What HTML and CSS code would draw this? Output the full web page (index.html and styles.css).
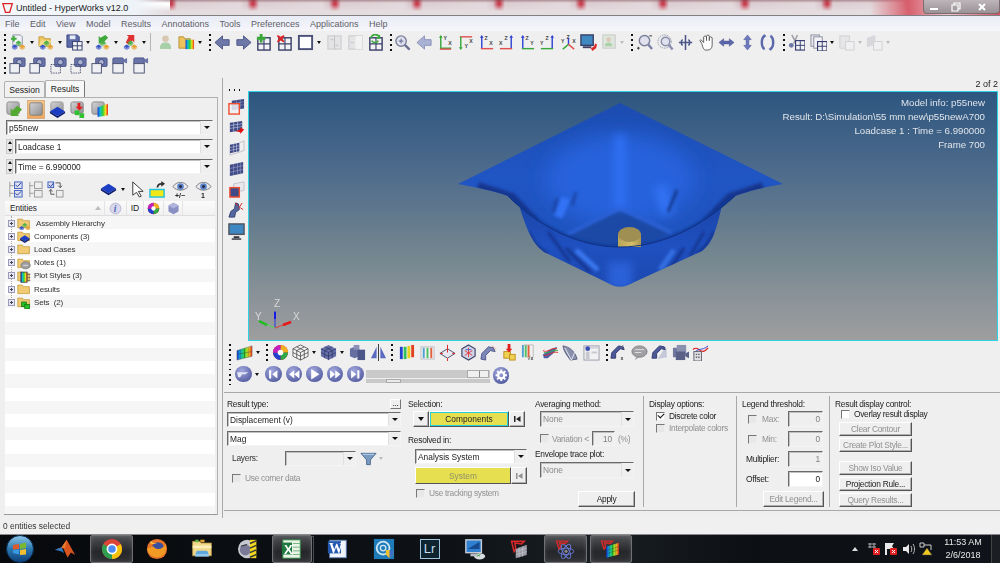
FILE: index.html
```html
<!DOCTYPE html>
<html lang="en">
<head>
<meta charset="utf-8">
<title>Untitled - HyperWorks v12.0</title>
<link rel="stylesheet" href="styles.css">
</head>
<body>
<svg class="defs" aria-hidden="true">
<defs>
<radialGradient id="gb" cx=".4" cy=".3" r=".8"><stop offset="0" stop-color="#9aa2dc"/><stop offset="1" stop-color="#3d478f"/></radialGradient>
<linearGradient id="rb" x1="0" x2="1"><stop offset="0" stop-color="#1630d8"/><stop offset=".25" stop-color="#10c0d0"/><stop offset=".5" stop-color="#30d030"/><stop offset=".75" stop-color="#f0e020"/><stop offset="1" stop-color="#e83020"/></linearGradient>
<linearGradient id="orb" x1="0" y1="0" x2="0" y2="1"><stop offset="0" stop-color="#8fc8ea"/><stop offset=".5" stop-color="#2a78b0"/><stop offset="1" stop-color="#0c3f78"/></linearGradient>
<linearGradient id="fg" x1="0" y1="0" x2="1" y2="1"><stop offset="0" stop-color="#d4d4d6"/><stop offset="1" stop-color="#8e8e92"/></linearGradient>
<g id="cb"><path d="M0 2 3 0l3 2-3 2z"/><path d="M0 2l3 2 3-2v2L3 6 0 4z" fill-opacity=".65"/></g>
<g id="bkg"><use href="#cb" x="6" y="7" fill="#4fb04a"/><use href="#cb" x="2" y="11" fill="#3a55c8"/><use href="#cb" x="10" y="11" fill="#e8a030"/></g>
<symbol id="s-new" viewBox="0 0 18 18"><path d="M3 1h8l2 2v9H3z" fill="#f2f3f7" stroke="#8c90a6"/><path d="M3 2h2v2h2v2H5v2H3V6H1V4h2z" fill="#3eaa3a"/><use href="#bkg"/></symbol>
<symbol id="s-open" viewBox="0 0 18 18"><path d="M1 3h5l1 2h6v8H1z" fill="#f0c860" stroke="#c09a40"/><path d="M1 13l2-6h11l-2 6z" fill="#f7dc8c"/><use href="#bkg"/></symbol>
<symbol id="s-save" viewBox="0 0 18 18"><path d="M1 1h11l2 2v11H1z" fill="#5d6ba8" stroke="#3a4580"/><rect x="4" y="1.500" width="6" height="4" fill="#e8eaf4"/><rect x="7" y="8" width="10" height="9" fill="#f2f2f2" stroke="#333c70"/><path d="M12 8v9M7 12.500h10" stroke="#333c70"/></symbol>
<symbol id="s-imp" viewBox="0 0 18 18"><path d="M12 1l3 3-4 4 2 2H5V2l2 2z" fill="#3ea83a"/><use href="#bkg"/></symbol>
<symbol id="s-exp" viewBox="0 0 18 18"><path d="M4 9l3 2 4-4 2 2V1H5l2 2z" fill="#e03030"/><use href="#bkg"/></symbol>
<symbol id="s-person" viewBox="0 0 18 18"><circle cx="9" cy="5" r="3.500" fill="#d8c8b0"/><path d="M3 16c0-5 2-7 6-7s6 2 6 7z" fill="#a8d0a8"/></symbol>
<symbol id="s-frb" viewBox="0 0 18 18"><path d="M1 3h5l1 2h6v10H1z" fill="#eec25c" stroke="#b8923c"/><rect x="8" y="6" width="9" height="10" fill="url(#rb)"/></symbol>
<symbol id="s-al" viewBox="0 0 18 18"><path d="M1 9l8-7v4h7v6H9v4z" fill="#6d78a8" stroke="#4a5488"/></symbol>
<symbol id="s-ar" viewBox="0 0 18 18"><path d="M17 9L9 2v4H2v6h7v4z" fill="#6d78a8" stroke="#4a5488"/></symbol>
<g id="pg"><rect x="3" y="4" width="13" height="13" fill="#f3f3f6" stroke="#3a4068" stroke-width="1.500"/><path d="M9.500 4v13M3 10.500h13" stroke="#3a4068" stroke-width="1.200"/></g>
<symbol id="s-padd" viewBox="0 0 18 18"><use href="#pg"/><path d="M5 0h3v3h3v3H8v3H5V6H2V3h3z" fill="#3aa838"/></symbol>
<symbol id="s-pdel" viewBox="0 0 18 18"><use href="#pg"/><path d="M2 1l3 2 3-2 1 1-2 3 2 3-1 1-3-2-3 2-1-1 2-3-2-3z" fill="#d82828"/></symbol>
<symbol id="s-sq" viewBox="0 0 18 18"><rect x="2" y="2" width="14" height="14" fill="#fff" stroke="#4a5078" stroke-width="2"/></symbol>
<symbol id="s-pf1" viewBox="0 0 18 18"><rect x="2" y="2" width="14" height="14" fill="#e4e4e6" stroke="#c8c8cc"/><path d="M9 2v14M5 6h3M10 12h3" stroke="#c0c0c4"/></symbol>
<symbol id="s-pf2" viewBox="0 0 18 18"><rect x="2" y="2" width="14" height="14" fill="#e4e4e6" stroke="#c8c8cc"/><rect x="9" y="2" width="7" height="14" fill="#f2f2f2"/><path d="M4 9h3" stroke="#c0c0c4"/></symbol>
<symbol id="s-pref" viewBox="0 0 18 18"><use href="#pg"/><path d="M4 4a5 5 0 0 1 9-1M13 1v3h-3M12 7a4 4 0 0 1-7 0" fill="none" stroke="#3aa838" stroke-width="1.800"/></symbol>
<symbol id="s-zm" viewBox="0 0 18 18"><circle cx="7.500" cy="7.500" r="5.500" fill="#dfe2ee" stroke="#7a7f98" stroke-width="1.500"/><path d="M5 7.500h5M7.500 5v5" stroke="#5a6088"/><path d="M11.500 11.500l5 5" stroke="#6b7090" stroke-width="2.500"/></symbol>
<symbol id="s-alf" viewBox="0 0 18 18"><path d="M1 9l8-7v4h7v6H9v4z" fill="#aab2d4" stroke="#8b93bd"/></symbol>
<symbol id="s-a1" viewBox="0 0 18 18"><path d="M4 16V2M4 15h11" fill="none" stroke="#38a83c" stroke-width="1.500"/><path d="M3 16h12" stroke="#e25050" stroke-width="1.500"/><path d="M2 4l2-3 2 3z" fill="#38a83c"/><text x="7" y="6" class="axl">Y</text><text x="12" y="12" class="axl">X</text></symbol>
<symbol id="s-a2" viewBox="0 0 18 18"><path d="M3 3h13" stroke="#e25050" stroke-width="1.500"/><path d="M4 3v12" stroke="#38a83c" stroke-width="1.500"/><path d="M2 14l2 3 2-3z" fill="#38a83c"/><text x="13" y="9" class="axl">X</text><text x="8" y="15" class="axl">Y</text></symbol>
<symbol id="s-a3" viewBox="0 0 18 18"><path d="M4 15V3" stroke="#2f42d0" stroke-width="1.500"/><path d="M3 15.500h13" stroke="#e25050" stroke-width="1.500"/><path d="M2 4l2-3 2 3z" fill="#2f42d0"/><text x="7" y="6" class="axl">Z</text><text x="12" y="12" class="axl">X</text></symbol>
<symbol id="s-a4" viewBox="0 0 18 18"><path d="M14 15V3" stroke="#2f42d0" stroke-width="1.500"/><path d="M2 15.500h13" stroke="#e25050" stroke-width="1.500"/><path d="M12 4l2-3 2 3z" fill="#2f42d0"/><text x="7" y="6" class="axl">Z</text><text x="1" y="12" class="axl">X</text></symbol>
<symbol id="s-a5" viewBox="0 0 18 18"><path d="M4 15V3" stroke="#2f42d0" stroke-width="1.500"/><path d="M3 15.500h13" stroke="#38a83c" stroke-width="1.500"/><path d="M2 4l2-3 2 3z" fill="#2f42d0"/><text x="7" y="6" class="axl">Z</text><text x="12" y="12" class="axl">Y</text></symbol>
<symbol id="s-a6" viewBox="0 0 18 18"><path d="M14 15V3" stroke="#2f42d0" stroke-width="1.500"/><path d="M2 15.500h13" stroke="#38a83c" stroke-width="1.500"/><path d="M12 4l2-3 2 3z" fill="#2f42d0"/><text x="7" y="6" class="axl">Z</text><text x="1" y="12" class="axl">Y</text></symbol>
<symbol id="s-a7" viewBox="0 0 18 18"><path d="M9 11V4" stroke="#2f42d0" stroke-width="1.500"/><path d="M9 11l-6 5" stroke="#38a83c" stroke-width="1.500"/><path d="M9 11l6 5" stroke="#e25050" stroke-width="1.500"/><text x="7" y="5" class="axl">Z</text><text x="1" y="10" class="axl">Y</text><text x="13" y="10" class="axl">X</text></symbol>
<symbol id="s-mon" viewBox="0 0 18 18"><rect x="1" y="1" width="13" height="11" fill="#3f88c0" stroke="#3a4068" stroke-width="1.500"/><path d="M3 14h9" stroke="#3a4068" stroke-width="2"/><path d="M9 13l3 2 3-2 1-3 2 1-1 4-4 3-1-2z" fill="#d82828"/></symbol>
<symbol id="s-pfd" viewBox="0 0 18 18"><rect x="2" y="1" width="13" height="14" fill="#dfe6de" stroke="#c6c8c6"/><circle cx="8" cy="6" r="2.500" fill="#d9cbb8"/><path d="M4 13c0-3 2-4 4-4s4 1 4 4z" fill="#aad0aa"/></symbol>
<symbol id="s-zb" viewBox="0 0 18 18"><circle cx="9" cy="7" r="5.500" fill="#dfe2ee" stroke="#7a7f98" stroke-width="1.500"/><path d="M13 11l4 5" stroke="#7a80a8" stroke-width="2.500"/><path d="M14 2h3M1 15h3M2.500 13.500v3" stroke="#333"/></symbol>
<symbol id="s-zw" viewBox="0 0 18 18"><circle cx="8" cy="8" r="7" fill="none" stroke="#8a8ea4" stroke-dasharray="1.500 1"/><circle cx="9" cy="8" r="4.500" fill="#dfe2ee" stroke="#8a8ea8" stroke-width="1.500"/><path d="M12.500 11.500l4 5" stroke="#8a8eb0" stroke-width="2.500"/></symbol>
<symbol id="s-rot" viewBox="0 0 18 18"><path d="M9 1v16M2 9h14M6 6c-2 1-2 5 0 6M12 6c2 1 2 5 0 6" fill="none" stroke="#4a5488" stroke-width="1.600"/></symbol>
<symbol id="s-hand" viewBox="0 0 18 18"><path d="M4 10 2 7l1-1 3 3V3l1.500-1L9 3v4-5l1.500-1L12 2v5-3l1.500-1L15 4v8c0 3-2 5-5 5H8c-2 0-3-3-4-7z" fill="#fff" stroke="#5a5a5a"/></symbol>
<symbol id="s-h2" viewBox="0 0 18 18"><path d="M1 9l5-4v2.500h6V5l5 4-5 4v-2.500H6V13z" fill="#5c68ac" stroke="#444e8c" stroke-width=".5"/></symbol>
<symbol id="s-v2" viewBox="0 0 18 18"><path d="M9 1l4 5h-2.500v6H13l-4 5-4-5h2.500V6H5z" fill="#6c78c0" stroke="#4a5490" stroke-width=".5"/></symbol>
<symbol id="s-rr" viewBox="0 0 18 18"><path d="M6 2C2 4 2 14 6 16M12 2c4 2 4 12 0 14" fill="none" stroke="#5c68ac" stroke-width="2.600"/><path d="M5 0l3 2-3 2zM13 14l-3 2 3 2z" fill="#5c68ac"/></symbol>
<symbol id="s-cut" viewBox="0 0 18 18"><path d="M4 1l5 9M10 1L6 10" stroke="#9a9aa4" stroke-width="1.500"/><circle cx="3.500" cy="12" r="2.500" fill="#6c78a8"/><rect x="8" y="7" width="10" height="10" fill="#f2f2f2" stroke="#333c70" stroke-width="1.200"/><path d="M13 7v10M8 12h10" stroke="#333c70"/></symbol>
<symbol id="s-cpy" viewBox="0 0 18 18"><rect x="1" y="1" width="9" height="12" fill="#e8e8ee" stroke="#8a8ea0"/><rect x="4" y="3" width="9" height="12" fill="#f2f2f6" stroke="#8a8ea0"/><rect x="8" y="8" width="10" height="10" fill="#f2f2f2" stroke="#333c70" stroke-width="1.200"/><path d="M13 8v10M8 13h10" stroke="#333c70"/></symbol>
<symbol id="s-psf" viewBox="0 0 18 18"><rect x="2" y="2" width="10" height="13" fill="#e6e6e8" stroke="#d0d0d4"/><rect x="8" y="8" width="9" height="9" fill="#f0f0f2" stroke="#d0d0d4"/></symbol>
<symbol id="s-psf2" viewBox="0 0 18 18"><path d="M1 4l9-3v10l-9 3z" fill="#d8d8dc"/><rect x="8" y="8" width="9" height="9" fill="#f0f0f2" stroke="#d0d0d4"/></symbol>
<symbol id="s-cam" viewBox="0 0 18 18"><rect x="5" y="1" width="12" height="9" rx="1" fill="#6a74a8" stroke="#4a5488"/><circle cx="11" cy="5.500" r="3" fill="#aab0d0" stroke="#3f497c"/><rect x="1" y="7" width="10" height="10" fill="#eef0f4" stroke="#4a5070"/></symbol>
<symbol id="s-cam2" viewBox="0 0 18 18"><rect x="5" y="1" width="12" height="9" rx="1" fill="#6a74a8" stroke="#4a5488"/><circle cx="11" cy="5.500" r="3" fill="#aab0d0" stroke="#3f497c"/><rect x="1" y="8" width="10" height="9" fill="none" stroke="#4a5070" stroke-dasharray="1.500 1"/></symbol>
<symbol id="s-vid" viewBox="0 0 18 18"><rect x="2" y="1" width="11" height="7" rx="1" fill="#6a74a8" stroke="#4a5488"/><path d="M13 3l4-2v6l-4-2z" fill="#6a74a8"/><rect x="2" y="7" width="11" height="10" fill="#eef0f4" stroke="#4a5070"/></symbol>
<symbol id="s-cont" viewBox="0 0 18 18"><path d="M1 7l16-5v11L1 17z" fill="url(#rb)" stroke="#555" stroke-width=".5"/><path d="M5 6v10M9 5v10M13 4v10M1 11l16-3" stroke="#333" stroke-width=".4"/></symbol>
<symbol id="s-wheel" viewBox="0 0 18 18"><circle cx="9" cy="9" r="8" fill="#e02828"/><path d="M9 9V1a8 8 0 0 1 8 8z" fill="#f0b020"/><path d="M9 9h8a8 8 0 0 1-8 8z" fill="#2fa84a"/><path d="M9 9v8a8 8 0 0 1-8-8z" fill="#2040d0"/><path d="M9 9H1a8 8 0 0 1 8-8z" fill="#c020c0"/><circle cx="9" cy="9" r="3" fill="#fff"/></symbol>
<symbol id="s-wire" viewBox="0 0 18 18"><path d="M9 1l8 4v8l-8 4-8-4V5z M1 5l8 4 8-4M9 9v8M5 3l8 4v8M13 3L5 7v8M1 9l8 4 8-4" fill="#f4f4f4" stroke="#444" stroke-width=".8"/></symbol>
<symbol id="s-solid" viewBox="0 0 18 18"><path d="M9 1l8 4v8l-8 4-8-4V5z" fill="#6670a8"/><path d="M1 5l8 4 8-4M9 9v8M5 3l8 4v8M13 3L5 7v8M1 9l8 4 8-4" fill="none" stroke="#30386c" stroke-width=".8"/></symbol>
<symbol id="s-bl" viewBox="0 0 18 18"><path d="M1 5l5-2 5 2v8l-5 2-5-2z" fill="#6670a0"/><rect x="9" y="6" width="8" height="11" fill="#4d5688"/><rect x="5" y="1" width="6" height="5" fill="#8a90b8"/></symbol>
<symbol id="s-mir" viewBox="0 0 18 18"><path d="M7 3v12H1zM11 3v12h6z" fill="#5a6ac0"/><path d="M9 0v18" stroke="#333"/></symbol>
<symbol id="s-bars" viewBox="0 0 18 18"><rect x="2" y="3" width="3" height="13" fill="#2040d0"/><rect x="6" y="3" width="3" height="13" fill="#30c060"/><rect x="10" y="2" width="3" height="13" fill="#e8d020"/><rect x="14" y="1" width="3" height="13" fill="#e04020"/></symbol>
<symbol id="s-bars2" viewBox="0 0 18 18"><rect x="2" y="3" width="14" height="13" fill="#f0f0f0" stroke="#c0c0c8"/><rect x="4" y="4" width="2" height="11" fill="#50a0d0"/><rect x="8" y="4" width="2" height="11" fill="#50c060"/><rect x="12" y="4" width="2" height="11" fill="#e06040"/></symbol>
<symbol id="s-dia" viewBox="0 0 18 18"><path d="M1 10l8-5 8 5-8 5z" fill="#e8e8f0" stroke="#4a5070"/><path d="M9 1v8M1 10h3M14 10h3M9 15v3" stroke="#e02020"/></symbol>
<symbol id="s-cube" viewBox="0 0 18 18"><path d="M9 1l7 4v8l-7 4-7-4V5z" fill="#d0d4e8" stroke="#3a4068" stroke-width="1.200"/><path d="M9 4v10M5 7l8 5M13 7l-8 5" stroke="#e04040"/><path d="M6 6l6 0" stroke="#4060d0"/></symbol>
<symbol id="s-pipe" viewBox="0 0 18 18"><path d="M1 16l1-6 7-7 5 1 2 4-5-1-5 5v5z" fill="#7c88b8" stroke="#4a5488"/><path d="M13 2l4 4" stroke="#e05050" stroke-dasharray="1 1"/></symbol>
<symbol id="s-red" viewBox="0 0 18 18"><rect x="3" y="8" width="7" height="7" fill="#f0d050" stroke="#c09020"/><rect x="9" y="11" width="6" height="6" fill="#f0d050" stroke="#c09020"/><path d="M7 0h3v5h2l-3.500 4L5 5h2z" fill="#e02020"/></symbol>
<symbol id="s-vx" viewBox="0 0 18 18"><rect x="1" y="1" width="2" height="13" fill="#50a0d0"/><rect x="4" y="1" width="2" height="13" fill="#50c060"/><rect x="7" y="1" width="2" height="13" fill="#e06040"/><path d="M3 1h10v13" fill="none" stroke="#bbb"/><text x="7" y="17" class="axl">√x</text></symbol>
<symbol id="s-tw" viewBox="0 0 18 18"><path d="M1 11l7-5 8-3-3 6-7 6H2z" fill="#5060a8"/><path d="M1 7c5 3 9-4 15-2M2 12c5 1 9-5 15-3" fill="none" stroke="#e03030"/><path d="M2 9c5 2 9-4 15-2" fill="none" stroke="#30b040"/></symbol>
<symbol id="s-dish" viewBox="0 0 18 18"><path d="M1 2c7 1 13 6 15 14L9 17C5 12 2 8 1 2z" fill="#8890ac" stroke="#5a6080"/><path d="M3 4l7 13M15 5l-5 12" stroke="#e8e8f0"/></symbol>
<symbol id="s-doc" viewBox="0 0 18 18"><rect x="1" y="2" width="16" height="15" fill="#f2f2f4" stroke="#9a9aa8"/><rect x="2" y="2" width="14" height="3" fill="#d0d0dc"/><circle cx="5" cy="5" r="2.500" fill="#3a50b0"/><rect x="3" y="8" width="4" height="8" fill="#c8c8d0"/><rect x="9" y="8" width="6" height="2" fill="#c8c8d0"/></symbol>
<symbol id="s-pipx" viewBox="0 0 18 18"><path d="M1 15l1-6 7-7 5 1 1 3-4-1-5 5v5z" fill="#4a5898" stroke="#333c70"/><path d="M14 1l-2 3" stroke="#777"/><text x="11" y="17" class="axl">x</text></symbol>
<symbol id="s-bub" viewBox="0 0 18 18"><ellipse cx="9" cy="8" rx="8" ry="6" fill="#a0a0a4" stroke="#808084"/><path d="M6 13l-2 4 5-3z" fill="#a0a0a4"/><path d="M4 6h10M4 9h7" stroke="#e0e0e0"/></symbol>
<symbol id="s-pip2" viewBox="0 0 18 18"><path d="M16 2l1 12-10 2" fill="#c4c8d8"/><path d="M1 15l1-6 7-7 5 1 1 3-4-1-5 5v5z" fill="#4a5898" stroke="#333c70"/></symbol>
<symbol id="s-vstk" viewBox="0 0 18 18"><rect x="1" y="4" width="10" height="10" fill="#7078a0"/><rect x="5" y="1" width="10" height="9" fill="#8a90b0"/><rect x="4" y="8" width="10" height="9" fill="#5a6088"/><path d="M14 10l4-2v7l-4-2z" fill="#5a6088"/></symbol>
<symbol id="s-crv" viewBox="0 0 18 18"><path d="M1 6c6-6 8 8 16-2" fill="none" stroke="#e02020" stroke-width="1.300"/><path d="M2 10c5-7 8-2 15-8" fill="none" stroke="#3040d0"/><rect x="2" y="8" width="8" height="10" fill="#e0e0e2" stroke="#606070"/><path d="M4 11h4M4 14h4" stroke="#606070" stroke-width="1.500" stroke-dasharray="1.500 1"/></symbol>
<symbol id="c-frame" viewBox="0 0 18 18"><path d="M4 3l13-2v10L4 13z" fill="#3f4a86"/><path d="M9 2v10M13 2v10M4 6l13-2M4 9l13-2" stroke="#a0a4c8" stroke-width=".5"/><rect x="1" y="6" width="11" height="11" fill="#f0f0f4" fill-opacity=".85" stroke="#f05030" stroke-width="1.500"/></symbol>
<symbol id="c-red" viewBox="0 0 18 18"><path d="M2 4l13-2v10L2 14z" fill="#3f4a86"/><path d="M6 3v11M10 3v10M2 7l13-2M2 10l13-2" stroke="#d0d4e8" stroke-width=".6"/><path d="M8 13l5-2V9l4 2-4 5v-2z" fill="#e01010"/></symbol>
<symbol id="c-fr" viewBox="0 0 18 18"><path d="M2 5l10-2v9L2 14z" fill="#3f4a86"/><path d="M6 4v10M9 3v10M2 8l10-2M2 11l10-2" stroke="#d0d4e8" stroke-width=".6"/><path d="M12 3l5-2v10l-5 2-10 3V14" fill="none" stroke="#c0c0c8"/></symbol>
<symbol id="c-fl" viewBox="0 0 18 18"><path d="M2 5l14-3v12L2 17z" fill="#3f4a86"/><path d="M6 4v12M10 3v12M13 3v12M2 9l14-3M2 13l14-3" stroke="#a4a8d0" stroke-width=".6"/></symbol>
<symbol id="c-fb" viewBox="0 0 18 18"><path d="M6 3l11-2v9l-11 2z" fill="#e8e8ee" stroke="#c0c0c8"/><rect x="2" y="7" width="10" height="10" fill="#3f4a86" stroke="#f05030" stroke-width="1.500"/></symbol>
<symbol id="c-pipe" viewBox="0 0 18 18"><path d="M1 16l2-6 4-3 1-6 3 1 1 6-4 3-1 5z" fill="#5468a0" stroke="#344070"/><path d="M8 1l2 3M13 6l3 2M15 1l-4 6" stroke="#e02020"/></symbol>
<symbol id="c-mon" viewBox="0 0 18 18"><rect x="1" y="1" width="16" height="11" fill="#3e88c4" stroke="#50545e" stroke-width="1.500"/><path d="M6 14h6v2H6z" fill="#30343c"/><path d="M4 17h10" stroke="#30343c" stroke-width="1.500"/></symbol>
<symbol id="f-imp" viewBox="0 0 18 18"><rect x="1" y="1" width="13" height="13" rx="2" fill="url(#fg)" stroke="#888"/><path d="M17 9l-5 5 2 2H5V8l2 2 5-5z" fill="#52aa30"/></symbol>
<symbol id="f-sel" viewBox="0 0 18 18"><rect x="1" y="1" width="16" height="16" rx="2" fill="url(#fg)" stroke="#777"/></symbol>
<symbol id="f-blue" viewBox="0 0 18 18"><rect x="2" y="1" width="13" height="12" rx="2" fill="url(#fg)" stroke="#999"/><path d="M1 11l8-5 8 5-8 5z" fill="#1c3ec4"/><path d="M1 11l8 5 8-5v2l-8 5-8-5z" fill="#0c1e70"/></symbol>
<symbol id="f-down" viewBox="0 0 18 18"><rect x="1" y="1" width="13" height="12" rx="2" fill="url(#fg)" stroke="#888"/><path d="M8 2h3v4h3l-4 4-4-4h2z" fill="#e02020"/><rect x="5" y="10" width="5" height="5" fill="#30c030"/><rect x="10" y="13" width="5" height="5" fill="#30c030"/></symbol>
<symbol id="f-rain" viewBox="0 0 18 18"><rect x="1" y="1" width="13" height="13" rx="2" fill="url(#fg)" stroke="#888"/><path d="M7 7l11-4v12L7 17z" fill="url(#rb)"/></symbol>
<symbol id="e-chk" viewBox="0 0 18 18"><path d="M3 1v16M3 5h4M3 13h4" fill="none" stroke="#888" stroke-width=".8"/><rect x="8" y="1" width="8" height="7" fill="#dde" stroke="#4060c0"/><rect x="8" y="10" width="8" height="7" fill="#dde" stroke="#4060c0"/><path d="M9 4l2 2 4-4M9 13l2 2 4-4" fill="none" stroke="#2040a0"/></symbol>
<symbol id="e-uchk" viewBox="0 0 18 18"><path d="M3 1v16M3 5h4M3 13h4" fill="none" stroke="#888" stroke-width=".8"/><rect x="8" y="1" width="8" height="7" fill="#eee" stroke="#999"/><rect x="8" y="10" width="8" height="7" fill="#eee" stroke="#999"/></symbol>
<symbol id="e-tg" viewBox="0 0 18 18"><rect x="1" y="1" width="6" height="6" fill="#dde" stroke="#4060c0"/><path d="M2 4l2 2 3-4" fill="none" stroke="#2040a0"/><path d="M9 2h5v5M14 7l2-2M14 7l-2-2M8 14H4V9M4 9l-2 2M4 9l2 2" fill="none" stroke="#555"/><rect x="10" y="10" width="7" height="7" fill="#eee" stroke="#999"/></symbol>
<symbol id="e-blue" viewBox="0 0 18 18"><path d="M1 8l8-5 8 5-8 5z" fill="#1c3ec4"/><path d="M1 8l8 5 8-5v2l-8 5-8-5z" fill="#0c1e70"/></symbol>
<symbol id="e-cur" viewBox="0 0 18 18"><path d="M4 1v14l4-3 3 5 2-1-3-5h5z" fill="#fff" stroke="#333"/></symbol>
<symbol id="e-hl" viewBox="0 0 18 18"><rect x="1" y="9" width="15" height="8" fill="#f0e818" stroke="#20c0e0" stroke-width="1.500"/><path d="M8 7c0-3 2-5 5-5v-2l4 3-4 3V4c-2 0-3 1-3 3z" fill="#333" /></symbol>
<symbol id="e-eye" viewBox="0 0 18 18"><path d="M1 7c4-6 12-6 16 0-4 5-12 5-16 0z" fill="#e8eaf0" stroke="#777"/><circle cx="9" cy="7" r="3.500" fill="#5a80c8"/><circle cx="9" cy="7" r="1.500" fill="#223"/></symbol>
<symbol id="e-info" viewBox="0 0 18 18"><circle cx="9" cy="9" r="7.500" fill="#d8d8ee" stroke="#a8a8c0"/><text x="6.500" y="14" class="inf">i</text></symbol>
<symbol id="e-cube" viewBox="0 0 18 18"><path d="M9 1l7 4v8l-7 4-7-4V5z" fill="#8a8fc4"/><path d="M2 5l7 4 7-4-7-4z" fill="#b0b4dc"/></symbol>
<symbol id="tf" viewBox="0 0 18 18"><path d="M1 4h6l1 2h8v9H1z" fill="#f0cb74" stroke="#c49a3c"/></symbol>
<symbol id="tf-as" viewBox="0 0 18 18"><use href="#tf"/><use href="#bkg" y="2" x="1"/></symbol>
<symbol id="tf-co" viewBox="0 0 18 18"><use href="#tf"/><path d="M4 12l6-4 6 4-6 4z" fill="#1c3ec4"/><path d="M4 12l6 4 6-4v2l-6 4-6-4z" fill="#0c1e70"/></symbol>
<symbol id="tf-no" viewBox="0 0 18 18"><use href="#tf"/><ellipse cx="11" cy="12" rx="6" ry="4.500" fill="#a0a0a4" stroke="#777"/><path d="M8 12h6" stroke="#eee"/></symbol>
<symbol id="tf-pl" viewBox="0 0 18 18"><use href="#tf"/><rect x="5" y="4" width="8" height="13" fill="url(#rb)" stroke="#333"/><path d="M14 7h3M14 11h3M14 15h3" stroke="#555"/></symbol>
<symbol id="tf-se" viewBox="0 0 18 18"><use href="#tf"/><rect x="6" y="9" width="6" height="6" fill="#28c028" stroke="#107010"/><rect x="10" y="12" width="6" height="6" fill="#28c028" stroke="#107010"/></symbol>
<symbol id="skip" viewBox="0 0 8 8"><path d="M1 1h1.500v6H1zM7.500 1v6L3 4z"/></symbol>
</defs>
</svg>

<div class="app">
  <header class="title">
    <svg class="tlogo" viewBox="0 0 14 14"><path d="M1 2h11L9 12H4z" fill="none" stroke="#d22" stroke-width="1.500"/></svg>
    <span class="ttext">Untitled - HyperWorks v12.0</span>
    <div class="winbtns">
      <div class="wb"><svg viewBox="0 0 12 10"><path d="M2 7h8" stroke="#fff" stroke-width="2"/></svg></div>
      <div class="wb"><svg viewBox="0 0 12 10"><path d="M3 3h6v6H3zM5 3V1h6v6H9" fill="none" stroke="#fff" stroke-width="1.200"/></svg></div>
      <div class="wb wx"><svg viewBox="0 0 12 10"><path d="M3 2l6 6M9 2l-6 6" stroke="#fff" stroke-width="2"/></svg></div>
    </div>
  </header>
  <nav class="menu"><span>File</span><span>Edit</span><span>View</span><span>Model</span><span>Results</span><span>Annotations</span><span>Tools</span><span>Preferences</span><span>Applications</span><span>Help</span></nav>

  <div class="tb r1">
    <i class="grip ml4"></i>
    <div class="t28 ml4"><svg class="ic"><use href="#s-new"/></svg><b class="dd"></b></div>
    <div class="t28"><svg class="ic"><use href="#s-open"/></svg><b class="dd"></b></div>
    <div class="t28"><svg class="ic"><use href="#s-save"/></svg><b class="dd"></b></div>
    <div class="t28"><svg class="ic"><use href="#s-imp"/></svg><b class="dd"></b></div>
    <div class="t28"><svg class="ic"><use href="#s-exp"/></svg><b class="dd"></b></div>
    <i class="sep"></i>
    <div class="t ml4"><svg class="ic"><use href="#s-person"/></svg></div>
    <div class="t28 ml2"><svg class="ic"><use href="#s-frb"/></svg><b class="dd"></b></div>
    <i class="grip ml3"></i>
    <div class="t ml2"><svg class="ic"><use href="#s-al"/></svg></div>
    <div class="t"><svg class="ic"><use href="#s-ar"/></svg></div>
    <div class="t"><svg class="ic"><use href="#s-padd"/></svg></div>
    <div class="t"><svg class="ic"><use href="#s-pdel"/></svg></div>
    <div class="t28 ml2"><svg class="ic"><use href="#s-sq"/></svg><b class="dd"></b></div>
    <div class="t"><svg class="ic"><use href="#s-pf1"/></svg></div>
    <div class="t"><svg class="ic"><use href="#s-pf2"/></svg></div>
    <div class="t"><svg class="ic"><use href="#s-pref"/></svg></div>
    <i class="grip ml4"></i>
    <div class="t"><svg class="ic"><use href="#s-zm"/></svg></div>
    <div class="t ml2"><svg class="ic"><use href="#s-alf"/></svg></div>
    <div class="t"><svg class="ic"><use href="#s-a1"/></svg></div>
    <div class="t"><svg class="ic"><use href="#s-a2"/></svg></div>
    <div class="t"><svg class="ic"><use href="#s-a3"/></svg></div>
    <div class="t"><svg class="ic"><use href="#s-a4"/></svg></div>
    <div class="t"><svg class="ic"><use href="#s-a5"/></svg></div>
    <div class="t"><svg class="ic"><use href="#s-a6"/></svg></div>
    <div class="t"><svg class="ic"><use href="#s-a7"/></svg></div>
    <div class="t"><svg class="ic"><use href="#s-mon"/></svg></div>
    <div class="t"><svg class="ic"><use href="#s-pfd"/></svg></div>
    <b class="dd fade"></b>
    <i class="grip ml7"></i>
    <div class="t ml2"><svg class="ic"><use href="#s-zb"/></svg></div>
    <div class="t"><svg class="ic"><use href="#s-zw"/></svg></div>
    <div class="t"><svg class="ic"><use href="#s-rot"/></svg></div>
    <div class="t"><svg class="ic"><use href="#s-hand"/></svg></div>
    <div class="t"><svg class="ic"><use href="#s-h2"/></svg></div>
    <div class="t"><svg class="ic"><use href="#s-v2"/></svg></div>
    <div class="t"><svg class="ic"><use href="#s-rr"/></svg></div>
    <i class="grip ml5"></i>
    <div class="t ml1"><svg class="ic"><use href="#s-cut"/></svg></div>
    <div class="t28 ml3"><svg class="ic"><use href="#s-cpy"/></svg><b class="dd"></b></div>
    <div class="t28"><svg class="ic"><use href="#s-psf"/></svg><b class="dd fade"></b></div>
    <div class="t28"><svg class="ic"><use href="#s-psf2"/></svg><b class="dd fade"></b></div>
  </div>
  <div class="tb r2">
    <i class="grip ml4"></i>
    <div class="t ml1"><svg class="ic"><use href="#s-cam"/></svg></div>
    <div class="t"><svg class="ic"><use href="#s-cam"/></svg></div>
    <div class="t"><svg class="ic"><use href="#s-cam2"/></svg></div>
    <div class="t"><svg class="ic"><use href="#s-cam2"/></svg></div>
    <div class="t"><svg class="ic"><use href="#s-cam"/></svg></div>
    <div class="t"><svg class="ic"><use href="#s-vid"/></svg></div>
    <div class="t"><svg class="ic"><use href="#s-vid"/></svg></div>
  </div>

  <main class="main">
    <aside class="left">
      <div class="tabs"><span class="tab">Session</span><span class="tab on">Results</span></div>
      <div class="lframe">
        <div class="ficons">
          <svg class="fi"><use href="#f-imp"/></svg>
          <span class="fsel"><svg class="fi"><use href="#f-sel"/></svg></span>
          <svg class="fi"><use href="#f-blue"/></svg>
          <svg class="fi"><use href="#f-down"/></svg>
          <svg class="fi"><use href="#f-rain"/></svg>
        </div>
        <div class="combo lc1"><span>p55new</span><b class="arr"></b></div>
        <div class="lrow2"><div class="spin"><b class="up"></b><b class="dn"></b></div><div class="combo grow"><span>Loadcase 1</span><b class="arr"></b></div></div>
        <div class="lrow2 lr3"><div class="spin"><b class="up"></b><b class="dn"></b></div><div class="combo grow"><span>Time = 6.990000</span><b class="arr"></b></div></div>
        <div class="eicons">
          <svg class="ei"><use href="#e-chk"/></svg>
          <svg class="ei"><use href="#e-uchk"/></svg>
          <svg class="ei"><use href="#e-tg"/></svg>
          <svg class="ei ebl"><use href="#e-blue"/></svg><b class="dd"></b>
          <svg class="ei ecu"><use href="#e-cur"/></svg>
          <svg class="ei ehl"><use href="#e-hl"/></svg>
          <div class="eye"><svg class="ei"><use href="#e-eye"/></svg><small>+/−</small></div>
          <div class="eye e2"><svg class="ei"><use href="#e-eye"/></svg><small>1</small></div>
        </div>
        <div class="tree">
          <div class="thead">
            <span class="th th1">Entities<b class="sort"></b></span>
            <span class="th th2"><svg class="thi"><use href="#e-info"/></svg></span>
            <span class="th th3">ID</span>
            <span class="th th4"><svg class="thi"><use href="#s-wheel"/></svg></span>
            <span class="th th5"><svg class="thi"><use href="#e-cube"/></svg></span>
          </div>
          <div class="tbody">
            <div class="tr"><b class="ex"></b><svg class="tic"><use href="#tf-as"/></svg><span class="tsp">Assembly Hierarchy</span></div>
            <div class="tr"><b class="ex"></b><svg class="tic"><use href="#tf-co"/></svg><span>Components (3)</span></div>
            <div class="tr"><b class="ex"></b><svg class="tic"><use href="#tf"/></svg><span>Load Cases</span></div>
            <div class="tr"><b class="ex"></b><svg class="tic"><use href="#tf-no"/></svg><span>Notes (1)</span></div>
            <div class="tr"><b class="ex"></b><svg class="tic"><use href="#tf-pl"/></svg><span>Plot Styles (3)</span></div>
            <div class="tr"><b class="ex"></b><svg class="tic"><use href="#tf"/></svg><span>Results</span></div>
            <div class="tr"><b class="ex"></b><svg class="tic"><use href="#tf-se"/></svg><span>Sets &nbsp;(2)</span></div>
          </div>
        </div>
      </div>
    </aside>

    <section class="right">
      <div class="upper">
        <div class="side">
          <div class="hgrip"></div>
          <svg class="sic s1"><use href="#c-frame"/></svg>
          <svg class="sic"><use href="#c-red"/></svg>
          <svg class="sic"><use href="#c-fr"/></svg>
          <svg class="sic"><use href="#c-fl"/></svg>
          <svg class="sic"><use href="#c-fb"/></svg>
          <svg class="sic"><use href="#c-pipe"/></svg>
          <svg class="sic"><use href="#c-mon"/></svg>
        </div>
        <div class="vwrap">
          <div class="pageno">2 of 2</div>
          <div class="view">
            <svg class="scene" viewBox="249 92 748 248" preserveAspectRatio="none">
              <defs>
                <filter id="b1" filterUnits="userSpaceOnUse" x="248" y="91" width="750" height="250"><feGaussianBlur stdDeviation="1.500"/></filter>
                <filter id="b2" filterUnits="userSpaceOnUse" x="248" y="91" width="750" height="250"><feGaussianBlur stdDeviation="4"/></filter>
                <filter id="b3" filterUnits="userSpaceOnUse" x="248" y="91" width="750" height="250"><feGaussianBlur stdDeviation="10"/></filter>
                <linearGradient id="sh" x1="0" y1="0" x2="0" y2="1"><stop offset="0" stop-color="#1c4cb0"/><stop offset=".5" stop-color="#2055c4"/><stop offset="1" stop-color="#1f52bc"/></linearGradient>
                <linearGradient id="lo" x1="0" y1="0" x2="0" y2="1"><stop offset="0" stop-color="#1a45a8"/><stop offset=".5" stop-color="#1f50c0"/><stop offset="1" stop-color="#1c48b0"/></linearGradient>
                <linearGradient id="cyl" x1="0" x2="1"><stop offset="0" stop-color="#b8a458"/><stop offset=".6" stop-color="#d4bf6a"/><stop offset="1" stop-color="#a89650"/></linearGradient>
                <clipPath id="shc"><path d="M620 103 783 184C760 188 745 192 735 196 700 228 660 247 620 247 580 247 540 228 508 196 498 192 480 188 458 184Z"/></clipPath>
                <clipPath id="loc"><path d="M519 205C527 232 534 245 544 252L612 285Q620 288 628 285L702 251C712 243 716 232 722 205Z"/></clipPath>
              </defs>
              <path d="M519 205C527 232 534 245 544 252L612 285Q620 288 628 285L702 251C712 243 716 232 722 205Z" fill="url(#lo)"/>
              <g clip-path="url(#loc)">
                <path d="M620 262V290" stroke="#2a60d8" stroke-width="24" filter="url(#b2)"/>
                <path d="M566 248 590 272" stroke="#12308a" stroke-width="3" filter="url(#b1)"/>
                <path d="M576 250 598 270" stroke="#3a78f0" stroke-width="5" filter="url(#b1)"/>
                <path d="M548 232 570 262" stroke="#14368f" stroke-width="3" filter="url(#b1)"/>
                <path d="M684 248 668 272" stroke="#12308a" stroke-width="3" filter="url(#b1)"/>
                <path d="M674 250 660 270" stroke="#3470e4" stroke-width="5" filter="url(#b1)"/>
                <path d="M704 232 690 256" stroke="#14368f" stroke-width="3" filter="url(#b1)"/>
                <path d="M528 232C535 245 540 250 548 254M714 232C708 245 702 250 696 254" fill="none" stroke="#12348e" stroke-width="3" filter="url(#b1)"/>
              </g>
              <path d="M620 103 783 184C760 188 745 192 735 196 700 228 660 247 620 247 580 247 540 228 508 196 498 192 480 188 458 184Z" fill="url(#sh)"/>
              <g clip-path="url(#shc)">
                <ellipse cx="620" cy="180" rx="75" ry="45" fill="#2662dc" filter="url(#b3)"/>
                <path d="M478 186 512 197 536 222M763 186 730 197 706 222" fill="none" stroke="#14368e" stroke-width="8" filter="url(#b1)"/>
                <path d="M620 210 672 233C655 241 640 247 620 247 600 247 585 243 566 235Z" fill="#1a48a6" filter="url(#b1)"/>
                <path d="M620 208 566 235M620 208 672 233" stroke="#2a60d4" stroke-width="4" filter="url(#b1)" fill="none"/>
                <path d="M620 135V208" stroke="#2f70f4" stroke-width="11" filter="url(#b2)"/>
                <path d="M566 198 558 217" stroke="#3272f4" stroke-width="9" filter="url(#b1)"/>
                <path d="M557 198 553 212M576 192 572 206" stroke="#1a45a8" stroke-width="3" filter="url(#b1)"/>
                <path d="M660 186 668 214" stroke="#3272f4" stroke-width="13" filter="url(#b2)"/>
                <path d="M677 190 668 212" stroke="#14398f" stroke-width="3" filter="url(#b1)"/>
                <path d="M508 196C540 228 580 247 620 247 660 247 700 228 735 196" fill="none" stroke="#103a98" stroke-width="3" filter="url(#b1)"/>
              </g>
              <path d="M618 235V247H641V235Z" fill="url(#cyl)"/>
              <ellipse cx="629.500" cy="234.500" rx="11.500" ry="7.500" fill="#a08f52"/>
              <path d="M508 196C540 228 580 247 620 247 660 247 700 228 735 196" fill="none" stroke="#0f2f80" stroke-width="1"/>
              <path d="M275 328V311" stroke="#4a56c8" stroke-width="1.500"/><rect x="274" y="312" width="2" height="7" fill="#1a1ae8"/>
              <path d="M275 328 259 321" stroke="#5ad05a" stroke-width="1.200"/><path d="M259 321 267 325" stroke="#18c018" stroke-width="2.500"/>
              <path d="M275 328 291 322" stroke="#d84848" stroke-width="1.200"/><path d="M291 322 283 325" stroke="#e81818" stroke-width="2.500"/>
              <text x="274" y="307" class="axv">Z</text><text x="255" y="320" class="axv">Y</text><text x="293" y="320" class="axv">X</text>
            </svg>
            <div class="info"><div>Model info: p55new</div><div>Result: D:\Simulation\55 mm new\p55newA700</div><div>Loadcase 1 : Time = 6.990000</div><div>Frame 700</div></div>
          </div>
        </div>
      </div>

      <div class="vb v1">
        <i class="grip ml6"></i>
        <div class="t28 ml5"><svg class="ic"><use href="#s-cont"/></svg><b class="dd"></b></div>
        <i class="grip ml2"></i>
        <div class="t ml2"><svg class="ic"><use href="#s-wheel"/></svg></div>
        <div class="t28 ml1"><svg class="ic"><use href="#s-wire"/></svg><b class="dd"></b></div>
        <div class="t28"><svg class="ic"><use href="#s-solid"/></svg><b class="dd"></b></div>
        <div class="t"><svg class="ic"><use href="#s-bl"/></svg></div>
        <div class="t"><svg class="ic"><use href="#s-mir"/></svg></div>
        <i class="grip ml2"></i>
        <div class="t ml4"><svg class="ic"><use href="#s-bars"/></svg></div>
        <div class="t"><svg class="ic"><use href="#s-bars2"/></svg></div>
        <div class="t"><svg class="ic"><use href="#s-dia"/></svg></div>
        <div class="t"><svg class="ic"><use href="#s-cube"/></svg></div>
        <div class="t"><svg class="ic"><use href="#s-pipe"/></svg></div>
        <div class="t"><svg class="ic"><use href="#s-red"/></svg></div>
        <div class="t"><svg class="ic"><use href="#s-vx"/></svg></div>
        <div class="t"><svg class="ic"><use href="#s-tw"/></svg></div>
        <div class="t"><svg class="ic"><use href="#s-dish"/></svg></div>
        <div class="t"><svg class="ic"><use href="#s-doc"/></svg></div>
        <i class="grip ml4"></i>
        <div class="t ml1"><svg class="ic"><use href="#s-pipx"/></svg></div>
        <div class="t"><svg class="ic"><use href="#s-bub"/></svg></div>
        <div class="t"><svg class="ic"><use href="#s-pip2"/></svg></div>
        <div class="t"><svg class="ic"><use href="#s-vstk"/></svg></div>
        <div class="t"><svg class="ic"><use href="#s-crv"/></svg></div>
      </div>
      <div class="vb v2">
        <i class="grip ml6"></i>
        <div class="t28 ml4"><span class="cbt"><svg viewBox="0 0 16 16"><path d="M2 6h11l-3 2H7l-2 3H3z" fill="#e4e6f4"/></svg></span><b class="dd"></b></div>
        <div class="t"><span class="cbt"><svg viewBox="0 0 16 16"><path d="M4 4h2v8H4zM12 4v8L7 8z" fill="#fff"/></svg></span></div>
        <div class="t"><span class="cbt"><svg viewBox="0 0 16 16"><path d="M8 4v8L3 8zM13 4v8L8 8z" fill="#fff"/></svg></span></div>
        <div class="t"><span class="cbt"><svg viewBox="0 0 16 16"><path d="M5 3l8 5-8 5z" fill="#fff"/></svg></span></div>
        <div class="t"><span class="cbt"><svg viewBox="0 0 16 16"><path d="M3 4v8l5-4zM8 4v8l5-4z" fill="#fff"/></svg></span></div>
        <div class="t"><span class="cbt"><svg viewBox="0 0 16 16"><path d="M4 4v8l5-4zM10 4h2v8h-2z" fill="#fff"/></svg></span></div>
        <div class="slider"><div class="trk"><b class="thumb"></b></div><div class="trk2"><b class="thumb2"></b></div></div>
        <div class="gear"><span class="cbt"><svg viewBox="0 0 16 16"><circle cx="8" cy="8" r="3" fill="none" stroke="#fff" stroke-width="2.200"/><path d="M8 2.500v2M8 11.500v2M2.500 8h2M11.500 8h2M4 4l1.500 1.500M10.500 10.500 12 12M4 12l1.500-1.500M10.500 5.500 12 4" stroke="#fff" stroke-width="1.800"/></svg></span></div>
      </div>

      <div class="panel">
        <div class="col c1">
          <div class="lb row-label"><span>Result type:</span><span class="more">...</span></div>
          <div class="combo m2"><span>Displacement (v)</span><b class="arr"></b></div>
          <div class="combo m4"><span>Mag</span><b class="arr"></b></div>
          <div class="layers m5">
            <span class="lb off-t layer-l">Layers:</span>
            <div class="combo off layer-c"><span></span><b class="arr"></b></div>
            <svg class="fun" viewBox="0 0 18 14"><path d="M1 1h16l-6 7v5H7V8z" fill="#7a9ac0" stroke="#4a6a90"/><path d="M3 2h12" stroke="#c0d8f0"/></svg>
            <b class="dd fade"></b>
          </div>
          <label class="chk ind5 m7 dim"><b class="box"></b>Use corner data</label>
        </div>
        <div class="col c2">
          <div class="lb">Selection:</div>
          <div class="selrow m1">
            <span class="btn sdd"><b class="tri"></b></span>
            <span class="ybtn y1">Components</span>
            <span class="btn sk"><svg class="skp"><use href="#skip"/></svg></span>
          </div>
          <div class="lb m8">Resolved in:</div>
          <div class="combo rsv m3"><span>Analysis System</span><b class="arr"></b></div>
          <div class="sysrow m3">
            <span class="ybtn y2">System</span>
            <span class="btn sk dimt"><svg class="skp"><use href="#skip"/></svg></span>
          </div>
          <label class="chk trk-c m4 dim"><b class="box"></b>Use tracking system</label>
        </div>
        <div class="col c3">
          <div class="lb">Averaging method:</div>
          <div class="combo off av m1"><span>None</span><b class="arr"></b></div>
          <div class="varrow m4 dim"><b class="box"></b><span>Variation &lt;</span><span class="field off f10">10</span><span>(%)</span></div>
          <div class="lb m3">Envelope trace plot:</div>
          <div class="combo off av m2"><span>None</span><b class="arr"></b></div>
          <span class="btn apply">Apply</span>
        </div>
        <div class="col c4">
          <div class="lb">Display options:</div>
          <label class="chk ind7 m1"><b class="box on"></b>Discrete color</label>
          <label class="chk ind7 m2 dim"><b class="box"></b>Interpolate colors</label>
        </div>
        <div class="col c5">
          <div class="lb">Legend threshold:</div>
          <div class="lrow m1 dim"><b class="box"></b><span>Max:</span><span class="field off">0</span></div>
          <div class="lrow m4 dim"><b class="box"></b><span>Min:</span><span class="field off">0</span></div>
          <div class="lrow m4 plain"><span>Multiplier:</span><span class="field off">1</span></div>
          <div class="lrow m4 plain"><span>Offset:</span><span class="field">0</span></div>
          <span class="btn dimt edit">Edit Legend...</span>
        </div>
        <div class="col c6">
          <div class="lb">Result display control:</div>
          <label class="chk ind6 over"><b class="box"></b>Overlay result display</label>
          <span class="btn dimt rb m3">Clear Contour</span>
          <span class="btn dimt rb m2">Create Plot Style...</span>
          <span class="btn dimt rb m9">Show Iso Value</span>
          <span class="btn rb m2">Projection Rule...</span>
          <span class="btn dimt rb m2">Query Results...</span>
        </div>
      </div>
    </section>
  </main>

  <div class="status">0 entities selected</div>

  <footer class="taskbar">
    <div class="orb"><svg viewBox="0 0 28 28"><circle cx="14" cy="14" r="13.500" fill="url(#orb)" stroke="#0a2c50"/><path d="M7 10l6-1v5l-6 .5z" fill="#e05a28"/><path d="M14 9l6-1.500V13l-6 1z" fill="#7ab830"/><path d="M7 15l6-.5v5L7 18z" fill="#3a9ae0"/><path d="M14 15l6-1v5.500l-6 .5z" fill="#f0c030"/></svg></div>
    <div class="tk tm"><svg viewBox="0 0 26 24"><path d="M1 13l8-3 6-9 10 18-5-3-4 6-5-11z" fill="#d8541e"/><path d="M1 13l8-3 3 7-3-2z" fill="#2f7ac0"/><path d="M9 10l6-9-2 10z" fill="#e88030"/></svg></div>
    <div class="tk on tc"><svg viewBox="0 0 24 24"><circle cx="12" cy="12" r="11" fill="#db4437"/><path d="M12 12 21.500 6.500A11 11 0 0 1 12 23Z" fill="#f4c20d"/><path d="M12 12V23A11 11 0 0 1 2.500 6.500Z" fill="#2e9e50"/><circle cx="12" cy="12" r="5" fill="#4c8bf5" stroke="#fff" stroke-width="1.800"/></svg></div>
    <div class="tk tf"><svg viewBox="0 0 24 24"><circle cx="12" cy="12" r="11" fill="#e8742a"/><circle cx="13" cy="11" r="6.500" fill="#3a4f9e"/><path d="M1 12c2 8 11 11 17 7 4-3 5-9 3-13-1 4-4 6-8 6-2 0-4-1-5-3z" fill="#f19a24"/><path d="M5 3c2 3 5 3 7 2-2 2-5 2-7 1z" fill="#f6c444"/></svg></div>
    <div class="tk tfo"><svg viewBox="0 0 26 24"><path d="M2 3h8l2 2h12v15H2z" fill="#f3d88c" stroke="#b89848"/><path d="M2 8h22v3H2z" fill="#fbeebc"/><rect x="5" y="1" width="4" height="3" fill="#60b040"/><rect x="11" y="1" width="5" height="3" fill="#e0a030"/><path d="M7 14h12l2 4H5z" fill="#5ea8e0"/><rect x="5" y="18" width="16" height="3" fill="#8fc8f0"/></svg></div>
    <div class="tk tw"><svg viewBox="0 0 24 24"><circle cx="10" cy="12" r="10" fill="#c8c8d0"/><circle cx="8" cy="13" r="6" fill="#7a7a98"/><path d="M13 2h7v20h-7z" fill="#f0d820"/><path d="M13 6l7-3M13 11l7-3M13 16l7-3M13 21l7-3" stroke="#333" stroke-width="1.500"/><path d="M3 9l7-2" stroke="#222"/></svg></div>
    <div class="tk on tx"><svg viewBox="0 0 24 24"><rect x="2" y="2" width="19" height="20" fill="#e9f3e6" stroke="#2d8a44"/><path d="M13 6h8M13 10h8M13 14h8M13 18h8" stroke="#6fb27e"/><rect x="1" y="5" width="11" height="13" fill="#1e7a3e"/></svg><span class="xl">X</span></div>
    <div class="stack"></div>
    <div class="tk twd"><svg viewBox="0 0 24 24"><rect x="3" y="2" width="19" height="20" fill="#f0f4fa" stroke="#5a80b8"/><path d="M1 3h15v14H1z" fill="#2458b0"/></svg><span class="wd">W</span></div>
    <div class="tk tcr"><svg viewBox="0 0 24 24"><rect x="1" y="1" width="22" height="22" fill="#1e7ab8"/><circle cx="11" cy="11" r="7" fill="none" stroke="#cde6f5" stroke-width="2"/><circle cx="11" cy="11" r="3" fill="none" stroke="#cde6f5" stroke-width="1.500"/><path d="M14 13h8v5l-4 4-4-4z" fill="#f0c030"/><path d="M18 13h4v5l-4 4z" fill="#3a70c8"/></svg></div>
    <div class="tk tlr"><span class="lr">Lr</span></div>
    <div class="tk tpc"><svg viewBox="0 0 24 24"><rect x="2" y="2" width="17" height="14" fill="#2f80d0" stroke="#c8ccd4" stroke-width="1.500"/><path d="M4 12l13-8v8z" fill="#174a90"/><ellipse cx="17" cy="20" rx="6" ry="3.500" fill="#d8dce0"/><path d="M14 20l4-2M15 18l2 2" stroke="#30a040"/><rect x="7" y="17" width="7" height="3" fill="#b8bcc4"/></svg></div>
    <div class="tk thm"><svg viewBox="0 0 26 24"><path d="M3 3h15l-3 3-8-1 1 7-2 3z" fill="none" stroke="#d82828" stroke-width="1.800"/><path d="M8 12l13-5v12L8 23z" fill="#9a9aa4"/><path d="M12 10v12M16 9v12M8 15l13-4M8 19l13-4" stroke="#c8c8d0" stroke-width=".7"/></svg></div>
    <div class="tk on thv"><svg viewBox="0 0 28 24"><path d="M2 2h14l-3 3-7-1 1 6-2 2z" fill="none" stroke="#d82828" stroke-width="1.800"/><ellipse cx="14" cy="15" rx="10" ry="4" fill="none" stroke="#6a7ad8" stroke-width="1.200"/><ellipse cx="14" cy="15" rx="10" ry="4" fill="none" stroke="#6a7ad8" stroke-width="1.200" transform="rotate(60 14 15)"/><ellipse cx="14" cy="15" rx="10" ry="4" fill="none" stroke="#6a7ad8" stroke-width="1.200" transform="rotate(-60 14 15)"/><circle cx="14" cy="15" r="2" fill="#888"/></svg></div>
    <div class="tk on thr"><svg viewBox="0 0 28 24"><path d="M2 2h14l-3 3-7-1 1 6-2 2z" fill="none" stroke="#d82828" stroke-width="1.800"/><path d="M8 9l16-5v15L8 23z" fill="url(#rb)"/><path d="M12 8v15M16 7v14M20 5v15M8 14l16-5M8 18l16-5" stroke="#222" stroke-width=".4"/></svg></div>
    <div class="tray">
      <b class="uptri"></b>
      <svg class="tri-ic" viewBox="0 0 14 14"><path d="M1 2h8M1 5h8M3 1v5M7 1v5" stroke="#aaa"/><rect x="6" y="6" width="7" height="7" rx="1" fill="#e02020"/><path d="M8 8l3 3M11 8l-3 3" stroke="#fff"/></svg>
      <svg class="tri-ic" viewBox="0 0 14 14"><path d="M2 1h8l-2 3 2 3H3v6H1V1z" fill="#e8e8e8"/><rect x="6" y="6" width="7" height="7" rx="1" fill="#e02020"/><path d="M8 8l3 3M11 8l-3 3" stroke="#fff"/></svg>
      <svg class="tri-ic" viewBox="0 0 14 14"><path d="M1 5h3l3-3v10L4 9H1z" fill="#e8e8e8"/><path d="M9 4c1 2 1 4 0 6M11 2c2 3 2 7 0 10" fill="none" stroke="#bbb"/></svg>
      <svg class="tri-ic" viewBox="0 0 14 14"><path d="M1 1h4v4H1zM5 3h7v5" fill="none" stroke="#ccc"/><path d="M8 6l5 7H3z" fill="#f0c820" stroke="#444" stroke-width=".5"/></svg>
      <div class="clock"><div>11:53 AM</div><div>2/6/2018</div></div>
      <div class="showd"></div>
    </div>
  </footer>
</div>
</body>
</html>
```
FILE: styles.css
```css
*{box-sizing:border-box}
html,body{margin:0;padding:0;width:1000px;height:563px;overflow:hidden;background:#efefef}
body{font:8.4px "Liberation Sans",Arial,sans-serif;color:#222}
.defs{position:absolute;width:0;height:0}
.app{width:1000px;height:563px;display:flex;flex-direction:column;filter:blur(.4px)}
.axl{font:bold 5.5px "Liberation Sans",sans-serif;fill:#444}
.inf{font:italic bold 13px "Liberation Serif",serif;fill:#4a6ab0}
.axv{font:10px "Liberation Sans",sans-serif;fill:#d8d8d8}

.title{height:16px;flex:none;display:flex;align-items:center;position:relative;padding-left:2px;
  background:
   linear-gradient(180deg,rgba(120,70,80,.5) 0,rgba(210,195,200,0) 3px,rgba(230,224,226,0) 30%,#e4dcdf 75%),
   repeating-linear-gradient(90deg,#c8404f 0 2px,#dccdd2 7px,#e3d9dc 70px,#d8c4ca 77px,#c8404f 82px),
   #fff;
  background-position:0 0,170px 0,0 0;
  background-size:auto,750px 100%,auto;
  background-repeat:no-repeat;
  border-bottom:1px solid #7f7f84}
.title::before{content:"";position:absolute;left:0;top:0;width:168px;height:15px;background:linear-gradient(90deg,#f4f8fc 0,#eef3f8 80%,rgba(238,243,248,0) 100%)}
.title::after{content:"";position:absolute;left:870px;top:0;width:130px;height:15px;background:linear-gradient(90deg,rgba(214,60,80,0),#d8606e 30%,#e8c8cc 60%,#d85060 100%)}
.tlogo{width:12px;height:12px;position:relative;z-index:1}
.ttext{font-size:9px;margin-left:2px;color:#1a1a1a;position:relative;z-index:1}
.winbtns{position:absolute;z-index:2;right:0;top:0;height:14px;width:77px;display:flex;border:1px solid #7a6c70;border-top:0;border-radius:0 0 4px 4px;background:linear-gradient(#bdb5b9,#9a9296)}
.wb{flex:1;display:flex;align-items:center;justify-content:center}
.wb svg{width:12px;height:10px}
.wx{flex:1.6}

.menu{height:15px;flex:none;display:flex;align-items:center;gap:10.500px;padding-left:5px;font-size:9px;color:#606068;background:linear-gradient(#e9ecf6,#f6f6fb)}
.tb{flex:none;display:flex;align-items:center;background:#efefef}
.r1{height:22px}
.r2{height:25px}
.t{width:20.500px;flex:none;display:flex;justify-content:center;align-items:center;height:20px}
.t28{width:28px;flex:none;display:flex;align-items:center;gap:3px;height:20px}
.ic{width:17px;height:17px;flex:none;display:block}
.dd{flex:none;width:0;height:0;border:2.500px solid transparent;border-top:3px solid #111;border-bottom:0}
.dd.fade{border-top-color:#bbb}
.grip{flex:none;width:2px;height:17px;background:repeating-linear-gradient(#111 0 1.500px,transparent 1.500px 5px)}
.sep{flex:none;width:1px;height:18px;background:#b4b4b4}
.ml1{margin-left:1px}.ml2{margin-left:2px}.ml3{margin-left:3px}.ml4{margin-left:4px}.ml5{margin-left:5px}.ml6{margin-left:6px}.ml7{margin-left:7px}

.main{height:440px;flex:none;display:flex}
.left{width:223px;flex:none;padding:2px 4px 0 4px;border-right:1px solid #a8a8a8;display:flex;flex-direction:column}
.tabs{display:flex;height:17px;flex:none;align-items:flex-end}
.tab{display:block;width:41px;height:16px;text-align:center;line-height:17px;font-size:8.600px;background:#f1f1f1;border:1px solid #b0b0b0;border-bottom:0;border-radius:2px 2px 0 0}
.tab.on{height:17px;width:40px;line-height:16px;background:#f7f7f7;border-right:1px solid #777;position:relative}
.lframe{height:418px;width:214px;border-top:1px solid #b0b0b0;border-right:1px solid #b0b0b0;border-bottom:1px solid #999;display:flex;flex-direction:column;padding-left:2px;overflow:hidden}
.ficons{display:flex;align-items:center;height:18px;margin-top:2px;gap:4px;padding-left:0}
.fi{width:17px;height:17px;flex:none;display:block}
.fsel{display:flex;justify-content:center;align-items:center;width:18px;height:19px;background:linear-gradient(#f6c68a,#f1a860);border:1px solid #d8b080}
.fsel .fi{width:14px;height:14px}
.combo{display:flex;align-items:center;justify-content:space-between;height:15px;background:#fff;border:1px solid;border-color:#6a6a6a #f4f4f4 #f4f4f4 #6a6a6a;box-shadow:inset 1px 1px 0 #c0c0c0;font-size:8.400px;padding-left:2px;flex:none}
.combo span{white-space:nowrap}
.arr{flex:none;width:12px;height:100%;background:#efefef;position:relative;border-left:1px solid #e0e0e0;display:flex;align-items:center;justify-content:center}
.arr::before{content:"";width:0;height:0;border:3px solid transparent;border-top:3.500px solid #111;border-bottom:0}
.lc1{width:207px;margin-top:2px}
.lrow2{display:flex;width:207px;margin-top:4px;gap:2px;height:15px}
.lr3{margin-top:5px}
.grow{flex:1}
.spin{width:7px;display:flex;flex-direction:column;justify-content:space-between;background:#e8e8e8;border:1px solid #c8c8c8;align-items:center;padding:1px 0}
.up,.dn{width:0;height:0;border:2.500px solid transparent}
.up{border-bottom:3px solid #111;border-top:0}
.dn{border-top:3px solid #111;border-bottom:0}
.eicons{display:flex;align-items:center;height:19px;margin-top:6px;padding-left:1px}
.ei{width:17px;height:17px;flex:none;display:block}
.ei+.ei{margin-left:3px}
.ebl{margin-left:36px!important}
.eicons .dd{margin-left:4px}
.ecu{margin-left:4px!important}
.ehl{margin-left:3px!important}
.eye{display:flex;flex-direction:column;align-items:center;margin-left:5px;height:19px;overflow:hidden;width:18px}
.e2{margin-left:5px}
.eye small{font:bold 7px "Liberation Sans",sans-serif;line-height:7px;margin-top:-5px}
.tree{margin:2px 0 0 -1px;width:210px;flex:1;display:flex;flex-direction:column;background:#fff;overflow:hidden}
.thead{height:15px;flex:none;display:flex;background:linear-gradient(#fbfbfb,#f1f1f1);border-bottom:1px solid #dedede;font-size:8.200px}
.th{display:flex;align-items:center;justify-content:center;border-right:1px solid #e4e4e4}
.th1{width:100px;justify-content:space-between;padding:0 3px 0 5px}
.th2{width:22px}.th3{width:17px;font-size:8.600px}.th4{width:20px}.th5{width:19px}
.thi{width:13px;height:13px}
.sort{width:0;height:0;border:3px solid transparent;border-bottom:4px solid #bdbdbd;border-top:0}
.tbody{flex:1;padding-top:.500px;background:repeating-linear-gradient(#f6f6f6 0 13.200px,#fff 13.200px 26.400px);position:relative}
.tbody::before{content:"";position:absolute;left:6px;top:0;height:86px;border-left:1px dotted #aaa}
.tr{display:flex;align-items:center;height:13.200px;padding-left:3px;font-size:8px;letter-spacing:-.13px;color:#333;position:relative}
.ex{width:7px;height:7px;flex:none;background:#e8e8f4;border:1px solid #9a9ab8;position:relative}
.ex::before{content:"";position:absolute;left:1px;right:1px;top:2px;height:1px;background:#445}
.ex::after{content:"";position:absolute;top:1px;bottom:1px;left:2px;width:1px;background:#445}
.tic{width:14px;height:14px;flex:none;margin-left:2px}
.tr span{margin-left:3px}
.tr .tsp{margin-left:5px}

.right{flex:1;display:flex;flex-direction:column;min-width:0}
.upper{height:263px;flex:none;display:flex}
.side{width:25px;flex:none;display:flex;flex-direction:column;align-items:center;padding-left:1px}
.hgrip{width:15px;height:2px;margin-top:11px;background:repeating-linear-gradient(90deg,#111 0 1.500px,transparent 1.500px 5px)}
.sic{width:17px;height:17px;flex:none;margin-top:3.800px;display:block}
.s1{margin-top:7px}
.vwrap{flex:1;display:flex;flex-direction:column;padding-right:2px}
.pageno{height:13px;text-align:right;font-size:9px;line-height:12px;color:#222}
.view{flex:1;position:relative;border:1px solid #2fd4e4;background:linear-gradient(#2d5680 0,#4f6c8c 33%,#74868f 66%,#8d949a 85%,#9e9e9e 100%);overflow:hidden}
.scene{position:absolute;left:0;top:0;width:100%;height:100%;display:block}
.info{position:absolute;right:12px;top:4px;text-align:right;font-size:9.700px;line-height:14px;color:#e0e4ea}

.vb{flex:none;display:flex;align-items:center}
.v1{height:22px}
.v2{height:28px;align-items:flex-start;padding-top:1px}
.v2 .grip{height:24px}
.cbt{width:16.500px;height:16.500px;border-radius:50%;display:flex;flex:none;background:radial-gradient(circle at 40% 30%,#a2a8de,#3f4990)}
.cbt svg{width:100%;height:100%}
.slider{width:124px;margin-left:0;margin-top:6px;flex:none;display:flex;flex-direction:column;gap:1px}
.trk{height:8px;background:#c9c9c9;display:flex;justify-content:flex-end;padding-right:1px}
.thumb{width:22px;height:8px;background:linear-gradient(90deg,#f0f0f0 0 11px,#888 11px 12px,#f0f0f0 12px);border:1px solid #aaa}
.trk2{height:4px;background:#c9c9c9;padding-left:20px}
.thumb2{display:block;width:15px;height:4px;background:#eaeaea;border:1px solid #aaa}
.gear{margin-left:3px;margin-top:3px}

.panel{margin-top:1px;height:119px;flex:none;display:flex;border-top:1px solid #a8a8a8;border-bottom:1px solid #a8a8a8;padding:3px 0 0 1px;margin-left:1px}
.col{height:111px;display:flex;flex-direction:column;padding-top:3px;flex:none;font-size:8.400px}
.lb{height:11px;line-height:11px;letter-spacing:-.25px;flex:none;white-space:nowrap}
.m1{margin-top:1px}.m2{margin-top:2px}.m3{margin-top:3px}.m4{margin-top:4px}.m5{margin-top:5px}.m7{margin-top:7px}.m8{margin-top:8px}.m9{margin-top:9px}
.c1{width:180px;padding-left:2px}
.c2{width:126px;padding-left:3px}
.c3{width:112px;padding-left:4px}
.c4{width:93px;padding-left:5px;border-left:1px solid #a8a8a8}
.c5{width:93px;padding-left:5px;border-left:1px solid #a8a8a8}
.c6{width:167px;padding-left:5px;border-left:1px solid #a8a8a8}
.c1 .combo{width:174px}
.row-label{display:flex;justify-content:space-between;width:174px}
.more{width:11px;height:10px;line-height:6px;text-align:center;background:#efefef;border:1px solid;border-color:#fff #777 #777 #fff}
.layers{display:flex;align-items:center;height:15px;padding-left:5px}
.layer-l{width:53px;color:#333}
.c1 .layer-c{width:71px}
.fun{width:17px;height:14px;margin-left:4px}
.layers .dd{margin-left:2px}
.combo.off{background:#efefef;color:#8a8a8a}
.chk{display:flex;align-items:center;gap:4px;height:10px;white-space:nowrap;flex:none;font-size:8.400px;letter-spacing:-.3px}
.box{flex:none;width:9px;height:9px;background:#fff;border:1px solid;border-color:#777 #eee #eee #777;position:relative;display:block}
.box.on::after{content:"";position:absolute;left:1px;top:0;width:5px;height:3px;border-left:1.500px solid #111;border-bottom:1.500px solid #111;transform:rotate(-45deg)}
.dim{color:#909090}
.dim .box{background:#e8e8e8}
.ind5{margin-left:5px}.ind6{margin-left:6px}.ind7{margin-left:7px}
.btn{display:flex;align-items:center;justify-content:center;background:#efefef;border:1px solid;border-color:#fff #555 #555 #fff;box-shadow:inset -1px -1px 0 #b0b0b0;font-size:8.400px;letter-spacing:-.25px;flex:none;white-space:nowrap}
.dimt{color:#909090}
.selrow{display:flex;height:16px;margin-left:5px;flex:none}
.sdd{width:16px}
.tri{width:0;height:0;border:3.500px solid transparent;border-top:4px solid #111;border-bottom:0}
.ybtn{display:flex;align-items:center;justify-content:center;background:#e6e050;flex:none;font-size:8.400px;border:1px solid;border-color:#fff #555 #555 #fff}
.y1{width:80px;outline:1px solid #22d0dc;outline-offset:-2px;color:#222}
.sk{width:16px}
.skp{width:8px;height:8px;fill:currentColor;display:block}
.rsv{width:112px;margin-left:7px;height:15px}
.sysrow{display:flex;height:17px;margin-left:7px;flex:none}
.y2{width:96px;color:#8f8f68}
.trk-c{margin-left:8px}
.av{width:94px;margin-left:5px;height:16px}
.varrow{display:flex;align-items:center;height:15px;margin-left:5px;gap:3px;flex:none;letter-spacing:-.25px}
.field{width:35px;height:16px;display:flex;align-items:center;justify-content:flex-end;padding-right:2px;background:#fff;border:1px solid;border-color:#6a6a6a #f4f4f4 #f4f4f4 #6a6a6a;box-shadow:inset 1px 1px 0 #c0c0c0;margin-left:auto;flex:none;color:#222}
.field.off{background:#efefef;color:#808080}
.field.f10{width:23px;height:15px;margin:0}
.apply{width:57px;height:16px;margin:13px 0 0 43px}
.lrow{display:flex;align-items:center;height:16px;width:81px;flex:none;padding-left:6px;gap:5px;letter-spacing:-.25px}
.lrow.plain{padding-left:4px;color:#222;gap:0}
.edit{width:61px;height:16px;margin:4px 0 0 21px}
.over{margin-top:-1px}
.rb{width:73px;height:14px;margin-left:4px}

.status{height:16px;flex:none;line-height:16px;padding:0 0 0 3px;font-size:8.400px;color:#333;background:#f0f0f0}
.taskbar{height:29px;flex:none;display:flex;align-items:center;background:linear-gradient(90deg,#07090c,#0e1216 45%,#1a1f24 60%,#0c0f13 75%,#10141a);border-top:1px solid #8a8a8c}
.orb{width:28px;height:28px;margin-left:6px;flex:none}
.orb svg,.tk svg{display:block}
.tk{height:28px;display:flex;align-items:center;justify-content:center;flex:none;position:relative}
.tk svg{width:22px;height:22px}
.tk.on{background:linear-gradient(#4e5054,#25272a 60%,#2e3033);border:1px solid #6f7174;border-radius:2px;box-shadow:inset 0 0 4px rgba(255,255,255,.15)}
.tm{width:24px;margin-left:19px}
.tc{width:43px;margin-left:13px}
.tf{width:22px;margin-left:13px}
.tfo{width:24px;margin-left:22px}
.tw{width:24px;margin-left:23px}
.tx{width:40px;margin-left:11px}
.stack{width:2px;height:27px;border:1px solid #4a4c4f;border-left:0;flex:none}
.twd{width:21px;margin-left:13px}
.tcr{width:22px;margin-left:25px}
.tlr{width:21px;margin-left:24px}
.tpc{width:22px;margin-left:24px}
.thm{width:22px;margin-left:23px}
.thv{width:43px;margin-left:13px}
.thr{width:42px;margin-left:3px}
.xl{position:absolute;left:11px;top:6px;color:#fff;font:bold 13px "Liberation Sans",sans-serif}
.wd{position:absolute;left:2px;top:6px;color:#fff;font:bold 14px "Liberation Serif",serif}
.lr{display:block;width:20px;height:20px;text-align:center;border:1px solid #a0c4dc;color:#c4dcec;background:#0e2530;font:13px/18px "Liberation Sans",sans-serif}
.tray{margin-left:auto;display:flex;align-items:center;height:28px}
.uptri{width:0;height:0;border:3px solid transparent;border-bottom:4px solid #ddd;border-top:0;margin-right:5.500px}
.tri-ic{width:14px;height:14px;margin-left:3.500px;flex:none;display:block}
.clock{width:54px;margin-left:3px;text-align:center;font-size:9px;line-height:13px;color:#e8e8e8}
.showd{width:9px;height:28px;margin-left:1px;border-left:1px solid #444;background:#1b1f24}
```
